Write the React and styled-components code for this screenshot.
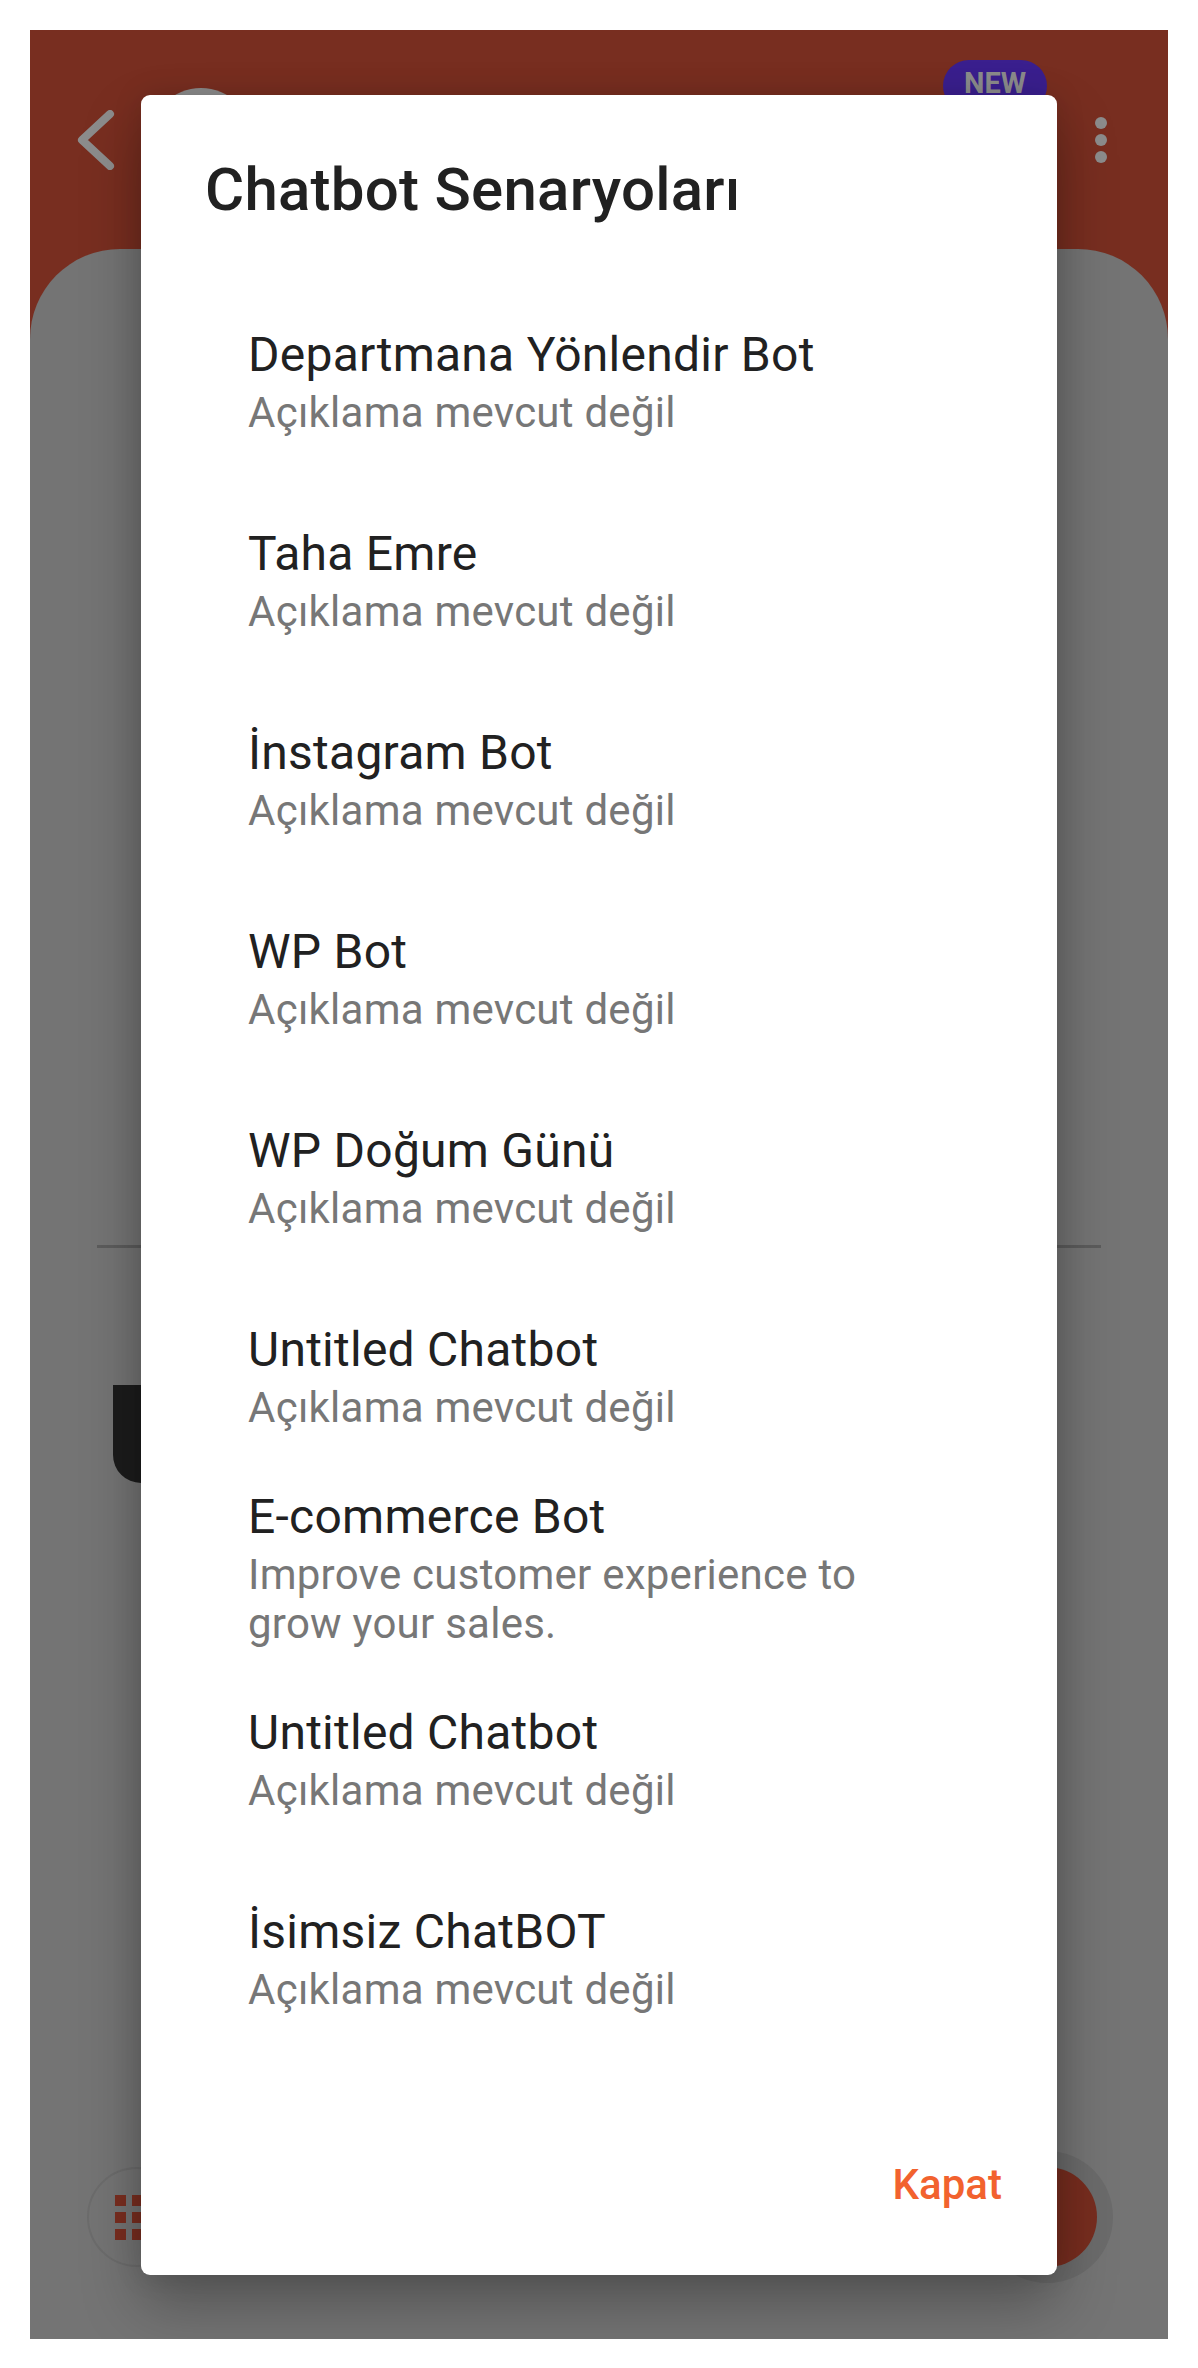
import React from 'react';
import styled, { createGlobalStyle } from 'styled-components';

const scenarios = [
  { title: 'Departmana Yönlendir Bot', desc: 'Açıklama mevcut değil' },
  { title: 'Taha Emre', desc: 'Açıklama mevcut değil' },
  { title: 'İnstagram Bot', desc: 'Açıklama mevcut değil' },
  { title: 'WP Bot', desc: 'Açıklama mevcut değil' },
  { title: 'WP Doğum Günü', desc: 'Açıklama mevcut değil' },
  { title: 'Untitled Chatbot', desc: 'Açıklama mevcut değil' },
  { title: 'E-commerce Bot', desc: 'Improve customer experience to grow your sales.', height: 184 },
  { title: 'Untitled Chatbot', desc: 'Açıklama mevcut değil' },
  { title: 'İsimsiz ChatBOT', desc: 'Açıklama mevcut değil' },
];

const App = () => {
  return (
    <>
      <GlobalStyle />
      <Page>
        <Screen>
          <Header>
            <HeaderRow>
              <BackButton>
                <svg width="40" height="60" viewBox="0 0 40 60">
                  <polyline points="34,4 6,30 34,56" fill="none" stroke="#8c8c8c" strokeWidth="8" strokeLinecap="round" strokeLinejoin="round" />
                </svg>
              </BackButton>
              <Avatar />
              <Spacer />
              <NewBadge>NEW</NewBadge>
              <MoreButton>
                <Dot />
                <Dot />
                <Dot />
              </MoreButton>
            </HeaderRow>
          </Header>
          <Card>
            <CardTop />
            <Divider />
            <DarkBlock />
          </Card>
          <BottomBar>
            <MenuButton>
              <GridIcon>
                {Array.from({ length: 9 }).map((_, i) => (
                  <GridCell key={i} />
                ))}
              </GridIcon>
            </MenuButton>
            <Fab />
          </BottomBar>

          <Overlay>
            <Dialog>
              <DialogTitle>Chatbot Senaryoları</DialogTitle>
              <List>
                {scenarios.map((s, i) => (
                  <Item key={i} $h={s.height || 199}>
                    <ItemTitle>{s.title}</ItemTitle>
                    <ItemDesc>{s.desc}</ItemDesc>
                  </Item>
                ))}
              </List>
              <Footer>
                <TextButton>Kapat</TextButton>
              </Footer>
            </Dialog>
          </Overlay>
        </Screen>
      </Page>
    </>
  );
};

export default App;

const GlobalStyle = createGlobalStyle`
  html, body {
    margin: 0;
    padding: 0;
    background: #ffffff;
    font-family: Roboto, "Noto Sans", "Liberation Sans", sans-serif;
  }
  * {
    box-sizing: border-box;
  }
`;

const Page = styled.div`
  width: 1198px;
  height: 2368px;
  padding: 30px 30px 29px;
  background: #ffffff;
`;

const Screen = styled.div`
  position: relative;
  width: 1138px;
  height: 2309px;
  display: flex;
  flex-direction: column;
  overflow: hidden;
  background: #747474;
`;

const Header = styled.div`
  height: 309px;
  padding-bottom: 90px;
  background: #782e20;
`;

const HeaderRow = styled.div`
  height: 219px;
  display: flex;
  align-items: center;
  padding: 0 61px 0 46px;
`;

const BackButton = styled.div`
  width: 40px;
  height: 60px;
  display: flex;
  align-items: center;
`;

const Avatar = styled.div`
  width: 104px;
  height: 104px;
  margin-left: 33px;
  border-radius: 50%;
  background: #8c8c8c;
`;

const Spacer = styled.div`
  flex: 1;
`;

const NewBadge = styled.div`
  align-self: flex-start;
  margin-top: 30px;
  width: 104px;
  height: 52px;
  border-radius: 26px;
  background: #3a1f8e;
  color: #8c8c8c;
  font-size: 29px;
  font-weight: 700;
  text-align: center;
  padding-bottom: 10px;
  line-height: 46px;
`;

const MoreButton = styled.div`
  margin-left: 48px;
  display: flex;
  flex-direction: column;
  gap: 5px;
`;

const Dot = styled.div`
  width: 12px;
  height: 12px;
  border-radius: 50%;
  background: #8c8c8c;
`;

const Card = styled.div`
  flex: 1;
  margin-top: -90px;
  border-radius: 90px 90px 0 0;
  background: #747474;
  display: flex;
  flex-direction: column;
`;

const CardTop = styled.div`
  height: 996px;
`;

const Divider = styled.div`
  height: 3px;
  margin: 0 67px;
  background: #5c5c5c;
`;

const DarkBlock = styled.div`
  width: 400px;
  height: 98px;
  margin: 137px 0 0 83px;
  border-radius: 0 0 28px 28px;
  background: #1c1c1c;
`;

const BottomBar = styled.div`
  height: 219px;
  padding: 47px 71px 0 57px;
  display: flex;
  justify-content: space-between;
  align-items: flex-start;
`;

const MenuButton = styled.div`
  width: 100px;
  height: 100px;
  border-radius: 50%;
  border: 2px solid #6c6c6c;
  display: flex;
  align-items: center;
  justify-content: center;
`;

const GridIcon = styled.div`
  display: grid;
  grid-template-columns: repeat(3, 11px);
  grid-auto-rows: 11px;
  gap: 6px;
`;

const GridCell = styled.div`
  background: #7a2e20;
`;

const Fab = styled.div`
  width: 100px;
  height: 100px;
  border-radius: 50%;
  background: #772d1f;
  box-shadow: 0 0 0 16px #6b6b6b;
`;

const Overlay = styled.div`
  position: absolute;
  inset: 0;
  display: flex;
  align-items: center;
  justify-content: center;
`;

const Dialog = styled.div`
  width: 916px;
  background: #ffffff;
  border-radius: 9px;
  box-shadow: 0 30px 60px rgba(0, 0, 0, 0.28), 0 0 30px rgba(0, 0, 0, 0.12);
  display: flex;
  flex-direction: column;
`;

const DialogTitle = styled.h2`
  margin: 0;
  padding: 60px 64px 0;
  font-size: 60px;
  line-height: 70px;
  font-weight: 500;
  letter-spacing: 0.25px;
  color: #212121;
`;

const List = styled.div`
  margin-top: 58px;
  display: flex;
  flex-direction: column;
`;

const Item = styled.div`
  height: ${(p) => p.$h}px;
  padding: 0 108px 0 107px;
  display: flex;
  flex-direction: column;
  justify-content: center;
  letter-spacing: 0.25px;
`;

const ItemTitle = styled.div`
  font-size: 48px;
  line-height: 56px;
  color: #212121;
`;

const ItemDesc = styled.div`
  margin-top: 5px;
  font-size: 42px;
  line-height: 49px;
  color: #777777;
`;

const Footer = styled.div`
  display: flex;
  justify-content: flex-end;
  padding: 101px 55px 66px;
`;

const TextButton = styled.button`
  border: none;
  background: none;
  padding: 0;
  font-family: Roboto, "Noto Sans", sans-serif;
  font-size: 42px;
  line-height: 49px;
  font-weight: 500;
  color: #f2622e;
`;
